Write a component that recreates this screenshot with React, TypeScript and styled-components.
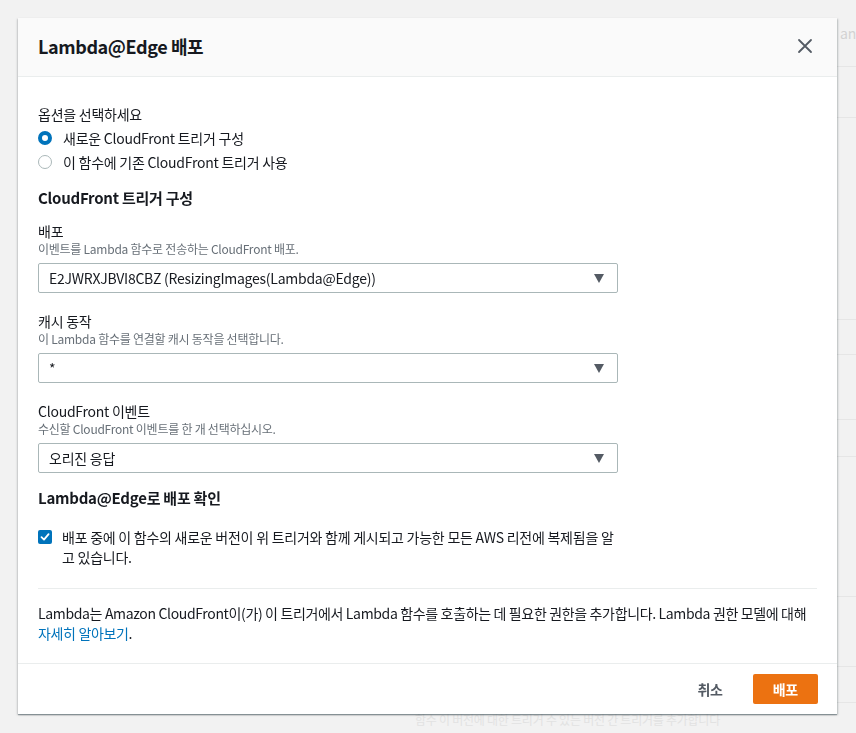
import React from "react";
import styled, { createGlobalStyle } from "styled-components";

const GlobalStyle = createGlobalStyle`
  html, body { margin: 0; padding: 0; }
  body {
    background: #f2f2f2;
    font-family: "Noto Sans CJK KR", "Noto Sans", sans-serif;
    color: #16191f;
    letter-spacing: -0.25px;
    -webkit-font-smoothing: antialiased;
  }
  * { box-sizing: border-box; }
`;

/* ---------- dimmed page behind the dialog ---------- */
const Page = styled.div`
  height: 733px;
  display: grid;
  grid-template-columns: 393px 1fr;
  overflow: hidden;
`;
const PageBlank = styled.div``;
const BgPanel = styled.div`
  display: flex;
  flex-direction: column;
`;
const BgRow = styled.div<{ $h: number }>`
  height: ${(p) => p.$h}px;
  flex: none;
  border-bottom: 1px solid #e6e6e6;
  display: flex;
  align-items: center;
  justify-content: flex-end;
  padding: 0 0 0 20px;
  color: #d2d2d2;
  font-size: 14px;
  white-space: nowrap;
  overflow: hidden;
`;
const BgText = styled.div`
  margin-top: 8px;
  padding-left: 22px;
  color: #e2e2e2;
  font-size: 12px;
  white-space: nowrap;
`;

/* ---------- dialog ---------- */
const Overlay = styled.div`
  position: fixed;
  inset: 0;
  padding: 18px 0 0 18px;
`;
const Modal = styled.div`
  width: 819px;
  background: #ffffff;
  box-shadow: 0 1px 1px rgba(0, 28, 36, 0.3), 1px 1px 2px rgba(0, 28, 36, 0.2),
    -1px 1px 2px rgba(0, 28, 36, 0.15);
  display: flex;
  flex-direction: column;
`;
const Header = styled.div`
  height: 59px;
  background: #fafafa;
  border-bottom: 1px solid #eaeded;
  display: flex;
  align-items: center;
  justify-content: space-between;
  padding: 0 20px 2px 20px;
`;
const Title = styled.h2`
  margin: 0;
  font-size: 18px;
  line-height: 22px;
  font-weight: 700;
  letter-spacing: -0.4px;
  color: #16191f;
`;
const CloseButton = styled.button`
  border: 0;
  background: transparent;
  padding: 4px;
  display: flex;
  color: #545b64;
  cursor: pointer;
`;

const Body = styled.div`
  padding: 26px 20px 20px 20px;
  display: flex;
  flex-direction: column;
`;
const GroupLabel = styled.div`
  font-size: 14px;
  line-height: 22px;
`;
const RadioGroup = styled.div`
  margin-top: 1px;
  display: flex;
  flex-direction: column;
`;
const RadioRow = styled.label`
  display: flex;
  align-items: center;
  gap: 11px;
  height: 24px;
  font-size: 14px;
`;
const RadioDot = styled.span<{ $checked?: boolean }>`
  width: 14px;
  height: 14px;
  border-radius: 50%;
  flex: none;
  background: #fff;
  border: ${(p) => (p.$checked ? "4px solid #0073bb" : "1.5px solid #aab7b8")};
`;
const SectionTitle = styled.h3<{ $mt: number }>`
  margin: ${(p) => p.$mt}px 0 0 0;
  font-size: 15px;
  line-height: 22px;
  font-weight: 700;
`;
const Field = styled.div<{ $mt: number }>`
  margin-top: ${(p) => p.$mt}px;
  display: flex;
  flex-direction: column;
`;
const FieldLabel = styled.div`
  font-size: 14px;
  line-height: 20px;
`;
const FieldDesc = styled.div`
  font-size: 12px;
  line-height: 16px;
  color: #687078;
`;
const Select = styled.div`
  margin-top: 6px;
  width: 580px;
  height: 30px;
  border: 1px solid #aab7b8;
  border-radius: 2px;
  display: flex;
  align-items: center;
  justify-content: space-between;
  padding: 0 13px 0 10px;
  font-size: 14px;
`;
const Caret = styled.span`
  width: 0;
  height: 0;
  border-left: 5.5px solid transparent;
  border-right: 5.5px solid transparent;
  border-top: 9px solid #545b64;
`;
const CheckRow = styled.label`
  margin-top: 18px;
  display: flex;
  align-items: flex-start;
  gap: 10px;
  width: 580px;
  font-size: 14px;
  line-height: 20px;
`;
const CheckBox = styled.span`
  margin-top: 3px;
  width: 14px;
  height: 14px;
  flex: none;
  border-radius: 2px;
  background: #0073bb;
  display: flex;
  align-items: center;
  justify-content: center;
`;
const CheckText = styled.span`
  width: 560px;
`;
const Divider = styled.hr`
  margin: 21px 0 0 0;
  border: 0;
  border-top: 1px solid #eaeded;
`;
const Info = styled.p`
  margin: 14px 0 0 0;
  font-size: 14px;
  line-height: 20px;
  letter-spacing: -0.35px;
`;
const Link = styled.a`
  color: #0073bb;
  text-decoration: none;
`;

const Footer = styled.div`
  border-top: 1px solid #eaeded;
  padding: 10px 19px 10px 20px;
  display: flex;
  justify-content: flex-end;
  align-items: center;
  gap: 10px;
`;
const Button = styled.button<{ $primary?: boolean }>`
  height: 30px;
  padding: 0 20px;
  border-radius: 2px;
  border: 0;
  font-family: inherit;
  font-size: 14px;
  font-weight: 700;
  letter-spacing: inherit;
  color: ${(p) => (p.$primary ? "#ffffff" : "#545b64")};
  background: ${(p) => (p.$primary ? "#ec7211" : "transparent")};
  cursor: pointer;
`;

export default function App() {
  return (
    <>
      <GlobalStyle />
      <Page>
        <PageBlank />
        <BgPanel>
          <BgRow $h={67}>an</BgRow>
          <BgRow $h={51} />
          <BgRow $h={202} />
          <BgRow $h={35} />
          <BgRow $h={65} />
          <BgRow $h={37} />
          <BgRow $h={140} />
          <BgRow $h={70} />
          <BgRow $h={36} />
          <BgText>함수 이 버전에 대한 트리거 수 있는 버전 간 트리거를 추가합니다</BgText>
        </BgPanel>
      </Page>
      <Overlay>
        <Modal>
          <Header>
            <Title>Lambda@Edge 배포</Title>
            <CloseButton aria-label="닫기">
              <svg width="16" height="16" viewBox="0 0 16 16" fill="none">
                <path d="M2 2 L14 14 M14 2 L2 14" stroke="currentColor" strokeWidth="1.8" strokeLinecap="round" />
              </svg>
            </CloseButton>
          </Header>
          <Body>
            <GroupLabel>옵션을 선택하세요</GroupLabel>
            <RadioGroup>
              <RadioRow>
                <RadioDot $checked />
                새로운 CloudFront 트리거 구성
              </RadioRow>
              <RadioRow>
                <RadioDot />
                이 함수에 기존 CloudFront 트리거 사용
              </RadioRow>
            </RadioGroup>

            <SectionTitle $mt={13}>CloudFront 트리거 구성</SectionTitle>

            <Field $mt={12}>
              <FieldLabel>배포</FieldLabel>
              <FieldDesc>이벤트를 Lambda 함수로 전송하는 CloudFront 배포.</FieldDesc>
              <Select>
                <span>E2JWRXJBVI8CBZ (ResizingImages(Lambda@Edge))</span>
                <Caret />
              </Select>
            </Field>

            <Field $mt={18}>
              <FieldLabel>캐시 동작</FieldLabel>
              <FieldDesc>이 Lambda 함수를 연결할 캐시 동작을 선택합니다.</FieldDesc>
              <Select>
                <span>*</span>
                <Caret />
              </Select>
            </Field>

            <Field $mt={18}>
              <FieldLabel>CloudFront 이벤트</FieldLabel>
              <FieldDesc>수신할 CloudFront 이벤트를 한 개 선택하십시오.</FieldDesc>
              <Select>
                <span>오리진 응답</span>
                <Caret />
              </Select>
            </Field>

            <SectionTitle $mt={14}>Lambda@Edge로 배포 확인</SectionTitle>

            <CheckRow>
              <CheckBox>
                <svg width="10" height="10" viewBox="0 0 10 10" fill="none">
                  <path d="M1.5 5.2 L4 7.6 L8.6 2.2" stroke="#fff" strokeWidth="1.8" strokeLinecap="round" strokeLinejoin="round" />
                </svg>
              </CheckBox>
              <CheckText>
                배포 중에 이 함수의 새로운 버전이 위 트리거와 함께 게시되고 가능한 모든 AWS 리전에 복제됨을 알고 있습니다.
              </CheckText>
            </CheckRow>

            <Divider />

            <Info>
              Lambda는 Amazon CloudFront이(가) 이 트리거에서 Lambda 함수를 호출하는 데 필요한 권한을 추가합니다. Lambda 권한 모델에 대해{" "}
              <Link href="#">자세히 알아보기</Link>.
            </Info>
          </Body>
          <Footer>
            <Button>취소</Button>
            <Button $primary>배포</Button>
          </Footer>
        </Modal>
      </Overlay>
    </>
  );
}
